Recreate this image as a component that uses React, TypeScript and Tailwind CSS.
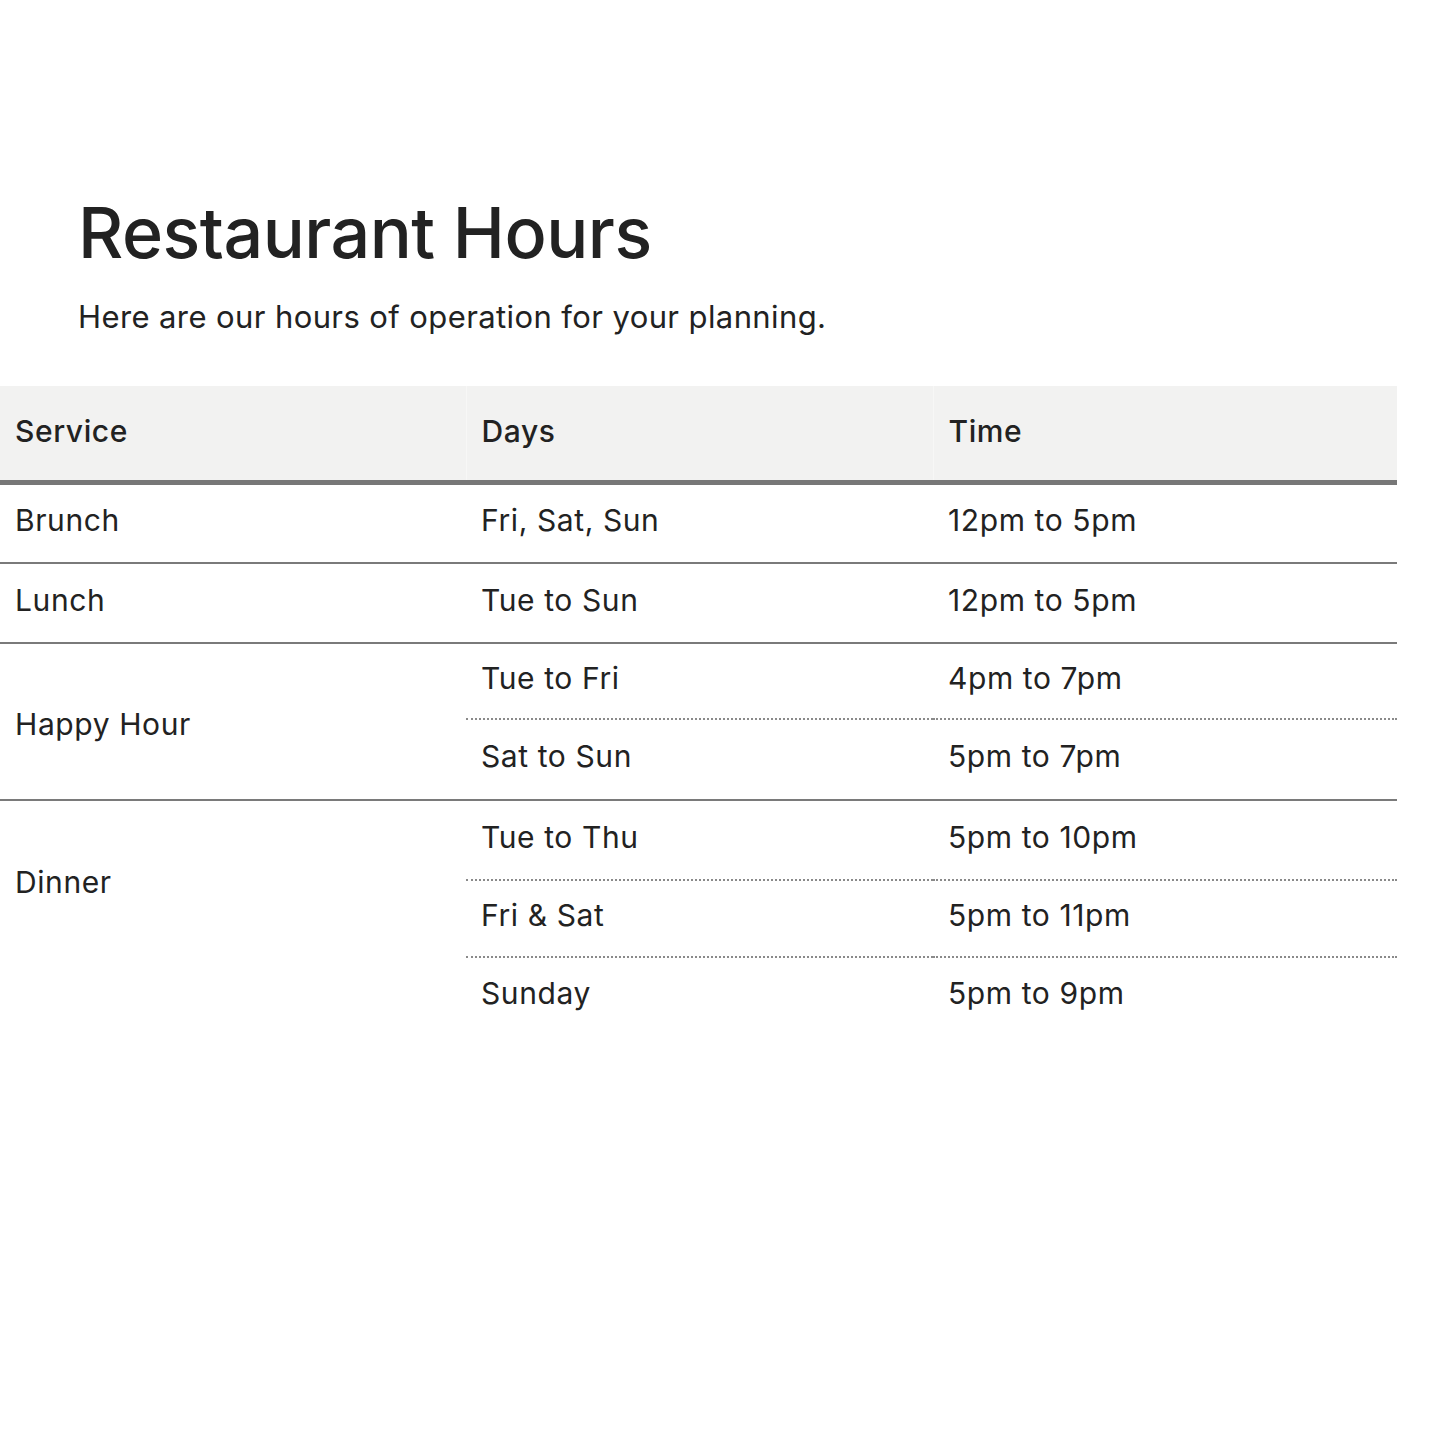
const rows = [
  { service: "Brunch", span: 1, slots: [{ days: "Fri, Sat, Sun", time: "12pm to 5pm", h: "h-[81px]" }] },
  { service: "Lunch", span: 1, slots: [{ days: "Tue to Sun", time: "12pm to 5pm", h: "h-[80px]" }] },
  {
    service: "Happy Hour",
    span: 2,
    slots: [
      { days: "Tue to Fri", time: "4pm to 7pm", h: "h-[76px]" },
      { days: "Sat to Sun", time: "5pm to 7pm", h: "h-[81px]" },
    ],
  },
  {
    service: "Dinner",
    span: 2,
    slots: [
      { days: "Tue to Thu", time: "5pm to 10pm", h: "h-[80px]" },
      { days: "Fri & Sat", time: "5pm to 11pm", h: "h-[77px]" },
      { days: "Sunday", time: "5pm to 9pm", h: "h-[78px]" },
    ],
  },
];

const solid = "border-b-2 border-solid border-b-[#7a7a7a]";
const dotted = "border-b-2 border-dotted border-b-[#8a8a8a]";

export default function App() {
  return (
    <div className="min-h-[1440px] bg-white pt-[193px] text-[#222222] font-['Inter','Noto_Sans',sans-serif]">
      <div className="pl-[78px]">
        <h1 className="text-[70px] leading-[80px] font-medium tracking-[-0.5px]">Restaurant Hours</h1>
        <p className="mt-[24px] text-[31px] leading-[40px] tracking-[0.4px]">
          Here are our hours of operation for your planning.
        </p>
      </div>

      <table className="mt-[49px] w-[1397px] border-collapse table-fixed text-[30px] leading-[36px] tracking-[0.6px]">
        <thead>
          <tr className="bg-[#f2f2f1]">
            <th className="h-[96px] w-[466px] px-[15px] pb-[3px] text-left font-medium border-r border-r-[#f7f7f6]">Service</th>
            <th className="h-[96px] w-[467px] px-[15px] pb-[3px] text-left font-medium border-r border-r-[#f7f7f6]">Days</th>
            <th className="h-[96px] px-[15px] pb-[3px] text-left font-medium">Time</th>
          </tr>
        </thead>
        <tbody className="border-t-[5px] border-t-[#777777]">
          {rows.map((r, ri) =>
            r.slots.map((s, si) => {
              const lastSlot = si === r.slots.length - 1;
              const lastRow = ri === rows.length - 1;
              const line = lastSlot ? (lastRow ? "" : solid) : dotted;
              const single = r.slots.length === 1;
              return (
                <tr key={r.service + s.days}>
                  {si === 0 && (
                    <td
                      rowSpan={r.span}
                      className={
                        "px-[15px] align-middle " +
                        (single ? "pb-[7px] " : "pt-[5px] ") +
                        (lastRow ? "" : solid)
                      }
                    >
                      {r.service}
                    </td>
                  )}
                  {si >= r.span && <td />}
                  <td className={s.h + " px-[15px] pb-[7px] align-middle " + line}>{s.days}</td>
                  <td className={s.h + " px-[15px] pb-[7px] align-middle " + line}>{s.time}</td>
                </tr>
              );
            })
          )}
        </tbody>
      </table>
    </div>
  );
}
